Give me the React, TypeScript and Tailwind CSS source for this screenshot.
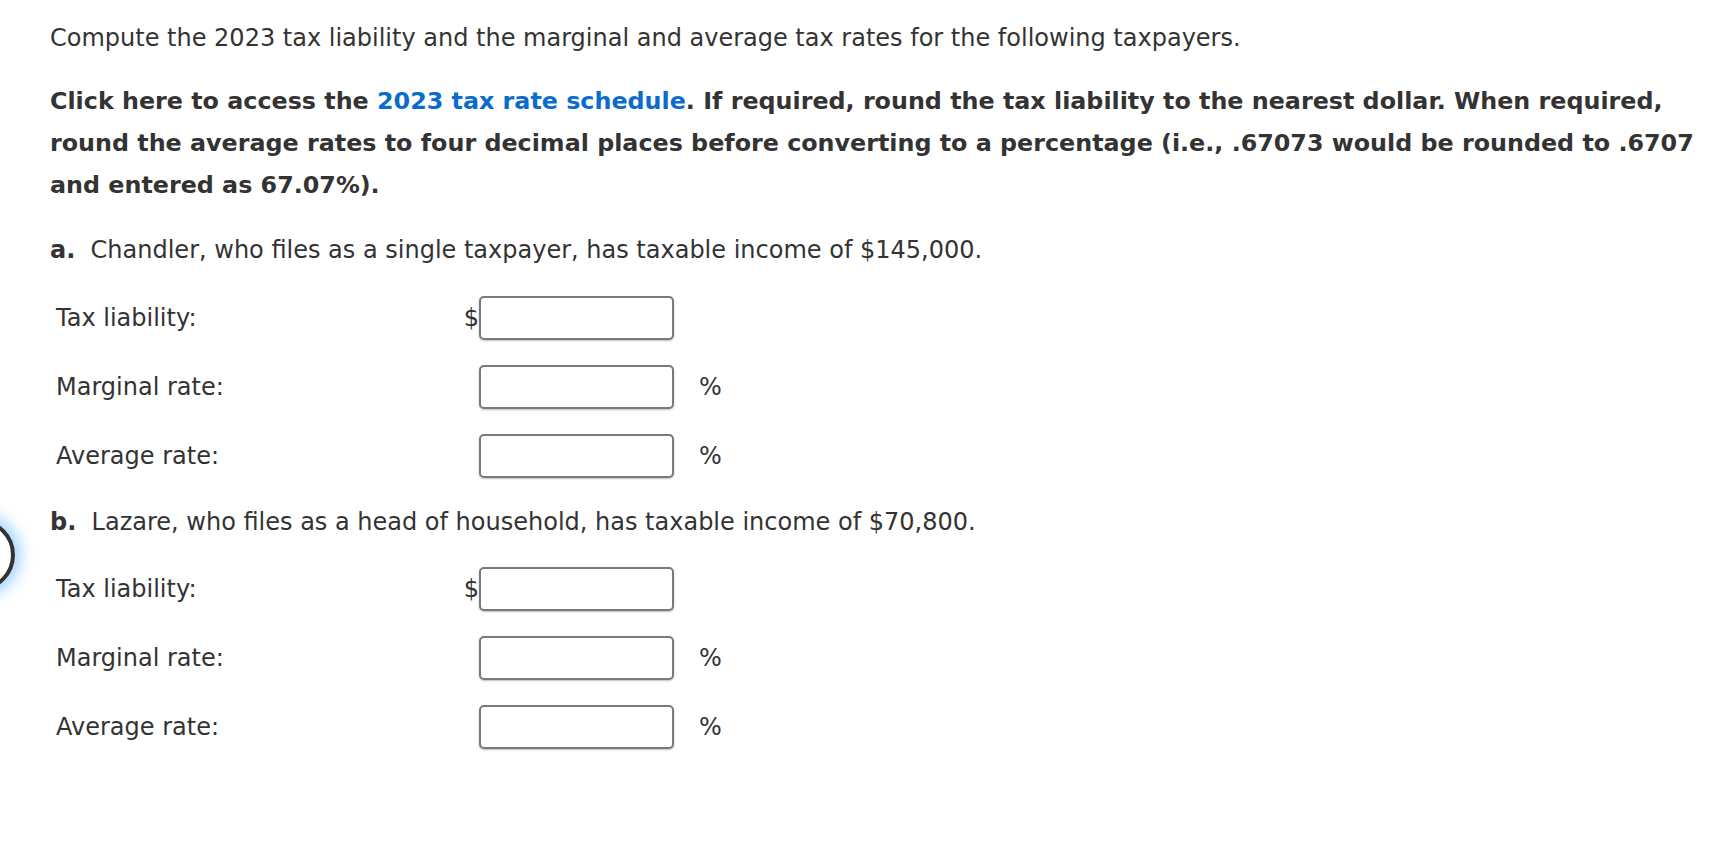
import React from 'react';

const font = { fontFamily: '"DejaVu Sans", Verdana, sans-serif' };

const Row = ({ label, prefix, suffix }: { label: string; prefix?: string; suffix?: string }) => (
  <div className="flex items-center h-[69px]">
    <div className="w-[409px] pl-[6px]">{label}</div>
    <div className="w-[20px] text-right">{prefix}</div>
    <input type="text" className="w-[195px] h-[44px] border-2 border-[#7a7a7a] rounded-[5px] bg-white shadow-[0_1px_2px_rgba(0,0,0,0.25)] outline-none" />
    <div className="pl-[25px]">{suffix}</div>
  </div>
);

export default function App() {
  return (
    <div className="relative w-[1722px] h-[852px] bg-white text-[#333] text-[24px] overflow-hidden" style={font}>
      <div className="absolute left-[-57px] top-[519px] w-[72px] h-[72px] rounded-full border-[4px] border-[#333] shadow-[0_0_14px_6px_rgba(90,180,255,0.55)]" />
      <div className="pl-[50px] pt-[20px]">
        <p className="leading-[36px]">Compute the 2023 tax liability and the marginal and average tax rates for the following taxpayers.</p>
        <p className="mt-[24px] font-bold text-[23.8px] leading-[42px] w-[1670px]">
          Click here to access the <span className="text-[#0a6ccc]">2023 tax rate schedule</span>. If required, round the tax liability to the nearest dollar. When required, round the average rates to four decimal places before converting to a percentage (i.e., .67073 would be rounded to .6707 and entered as 67.07%).
        </p>
        <p className="mt-[26px] leading-[36px]"><span className="font-bold">a.</span>&nbsp; Chandler, who files as a single taxpayer, has taxable income of $145,000.</p>
        <div className="mt-[15px]">
          <Row label="Tax liability:" prefix="$" />
          <Row label="Marginal rate:" suffix="%" />
          <Row label="Average rate:" suffix="%" />
        </div>
        <p className="mt-[14px] leading-[36px]"><span className="font-bold">b.</span>&nbsp; Lazare, who files as a head of household, has taxable income of $70,800.</p>
        <div className="mt-[14px]">
          <Row label="Tax liability:" prefix="$" />
          <Row label="Marginal rate:" suffix="%" />
          <Row label="Average rate:" suffix="%" />
        </div>
      </div>
    </div>
  );
}
